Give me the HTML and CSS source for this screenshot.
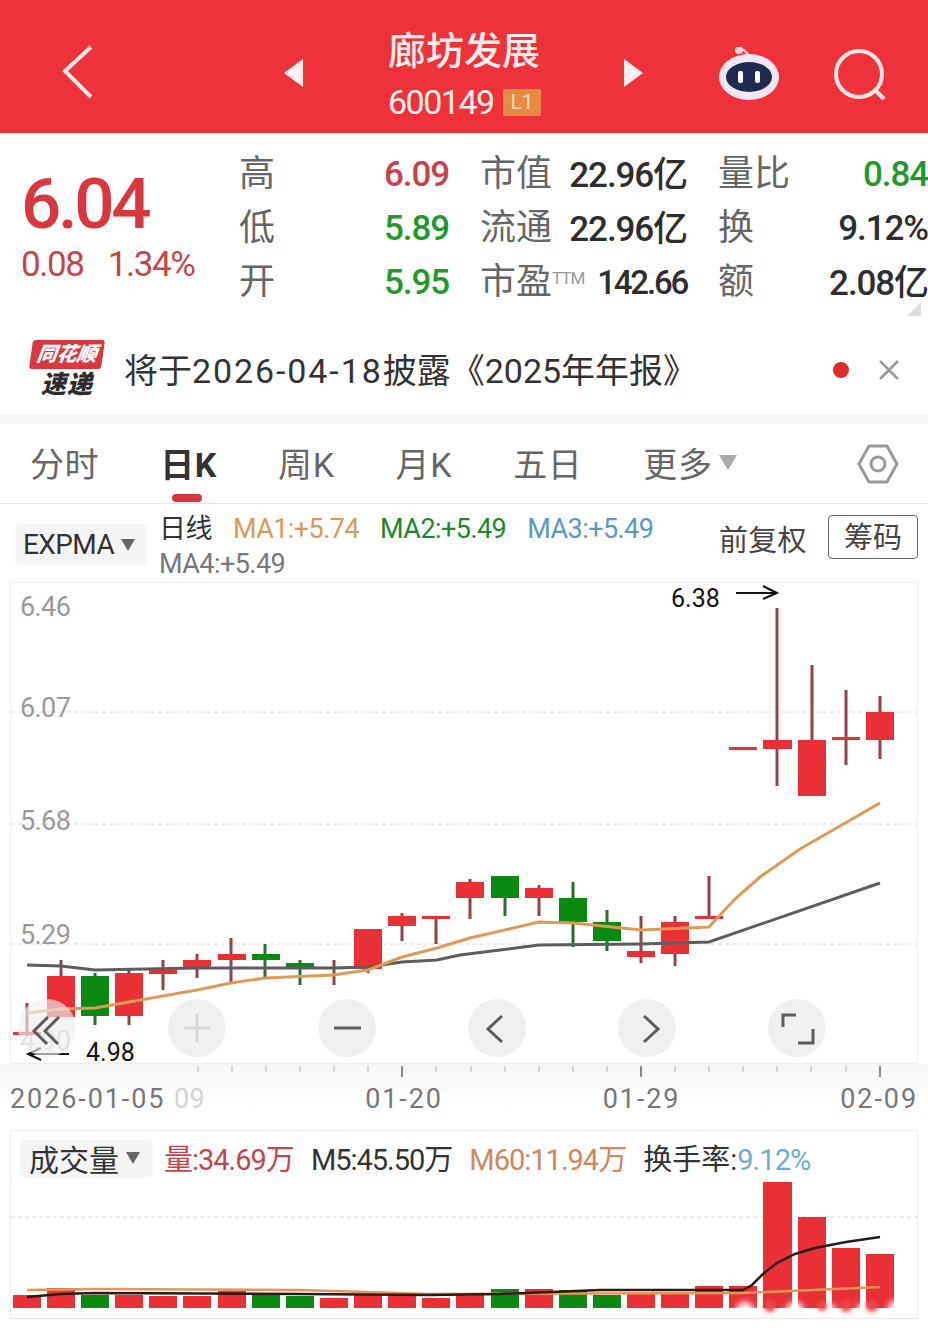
FILE: index.html
```html
<!DOCTYPE html>
<html>
<head>
    <meta charset="utf-8" />
    <title>廊坊发展</title>
    <link rel="stylesheet" href="styles.css">
</head>
<body>
    <div class="topbar">
        <svg class="back" width="32" height="54" viewBox="0 0 32 54"><path d="M29 2 3 26l26 26" /></svg>
        <div class="tri-left"></div>
        <div class="title">
            <div class="name">廊坊发展</div>
            <div class="code"><span>600149</span><span class="lv">L1</span></div>
        </div>
        <div class="tri-right"></div>
        <svg class="robot" width="62" height="56" viewBox="718 46 62 56">
            <path class="antenna" d="M739 48c4 0 7 2 9 6" />
            <circle class="antenna-dot" cx="739" cy="49" r="4" />
            <ellipse class="head" cx="749" cy="76" rx="30" ry="23" />
            <ellipse class="face" cx="749" cy="76" rx="23" ry="15" />
            <rect class="eye" x="738" y="70" width="5" height="12" rx="2" />
            <rect class="eye" x="755" y="70" width="5" height="12" rx="2" />
        </svg>
        <svg class="search" width="54" height="54" viewBox="832 46 54 54">
            <circle cx="858" cy="72" r="23" />
            <path d="m874 88 9 9" />
        </svg>
    </div>

    <div class="quote">
        <div class="price">
            <div class="now">6.04</div>
            <div class="change"><span>0.08</span><span>1.34%</span></div>
        </div>
        <div class="stats">
            <div class="cell"><span class="lab">高</span><span class="red">6.09</span></div>
            <div class="cell"><span class="lab">市值</span><span class="val yi">22.96亿</span></div>
            <div class="cell"><span class="lab">量比</span><span class="green">0.84</span></div>
            <div class="cell"><span class="lab">低</span><span class="green">5.89</span></div>
            <div class="cell"><span class="lab">流通</span><span class="val yi">22.96亿</span></div>
            <div class="cell"><span class="lab">换</span><span class="val">9.12%</span></div>
            <div class="cell"><span class="lab">开</span><span class="green">5.95</span></div>
            <div class="cell"><span class="lab">市盈<sup class="ttm">TTM</sup></span><span class="val pe">142.66</span></div>
            <div class="cell"><span class="lab">额</span><span class="val yi">2.08亿</span></div>
        </div>
        <div class="corner"></div>
    </div>

    <div class="news">
        <div class="logo">
            <div class="logo-tag">同花顺</div>
            <div class="logo-txt">速递</div>
        </div>
        <div class="news-txt">将于<span class="date">2026-04-18</span>披露《2025年年报》</div>
        <div class="dot"></div>
        <svg class="close" width="22" height="22" viewBox="0 0 22 22"><path d="m2 2 18 18M20 2 2 20" /></svg>
    </div>
    <div class="strip"></div>

    <div class="tabs">
        <div class="tab">分时</div>
        <div class="tab active">日K</div>
        <div class="tab">周K</div>
        <div class="tab">月K</div>
        <div class="tab">五日</div>
        <div class="tab more">更多<i class="down"></i></div>
        <svg class="hex" width="42" height="42" viewBox="0 0 42 42">
            <path d="M12 3h18l10 18-10 18H12L2 21z" />
            <circle cx="21" cy="21" r="7" />
        </svg>
    </div>

    <div class="ind">
        <div class="chip expma">EXPMA<i class="down dark"></i></div>
        <div class="ma">
            <span class="ri">日线</span>
            <span class="ma1">MA1:+5.74</span>
            <span class="ma2">MA2:+5.49</span>
            <span class="ma3">MA3:+5.49</span>
            <span class="ma4">MA4:+5.49</span>
        </div>
        <div class="fq">前复权</div>
        <div class="cm">筹码</div>
    </div>

    <svg class="kline" width="928" height="488" viewBox="0 582 928 488">
        <rect class="frame" x="10.5" y="582.5" width="907" height="481" />
        <path class="grid" d="M11 712h906M11 824h906M11 944h906" />
        <text class="ylab" x="20" y="616">6.46</text>
        <text class="ylab" x="20" y="717">6.07</text>
        <text class="ylab" x="20" y="830">5.68</text>
        <text class="ylab" x="20" y="944">5.29</text>
        <text class="ylab faint" x="20" y="1050">4.90</text>

        <g class="wick-r">
            <path d="M27 1003v33M61 960v17M129 970v55M163 960v30M197 954v24M231 938v44M334 960v25M368 969v4M402 913v28M436 919v25M470 879v40M539 885v31M641 916v47M675 916v50M709 876v40M777 608v178M812 665v75M846 690v75M880 696v63" />
        </g>
        <g class="wick-g">
            <path d="M95 973v52M265 944v34M300 960v25M505 898v18M573 882v65M607 910v41" />
        </g>
        <g class="body-r">
            <rect x="13" y="1032" width="28" height="3" />
            <rect x="47" y="976" width="28" height="41" />
            <rect x="115" y="973" width="28" height="43" />
            <rect x="149" y="970" width="28" height="4" />
            <rect x="183" y="960" width="28" height="8" />
            <rect x="218" y="954" width="28" height="6" />
            <rect x="320" y="967" width="28" height="2" />
            <rect x="354" y="929" width="28" height="40" />
            <rect x="388" y="916" width="28" height="10" />
            <rect x="422" y="916" width="28" height="3" />
            <rect x="456" y="882" width="28" height="16" />
            <rect x="525" y="888" width="28" height="10" />
            <rect x="627" y="951" width="28" height="6" />
            <rect x="661" y="922" width="28" height="32" />
            <rect x="695" y="916" width="28" height="3" />
            <rect x="729" y="747" width="28" height="3" />
            <rect x="763" y="740" width="29" height="9" />
            <rect x="798" y="740" width="28" height="56" />
            <rect x="832" y="737" width="28" height="3" />
            <rect x="866" y="712" width="28" height="28" />
        </g>
        <g class="body-g">
            <rect x="81" y="976" width="28" height="40" />
            <rect x="252" y="954" width="28" height="6" />
            <rect x="286" y="963" width="28" height="6" />
            <rect x="491" y="876" width="28" height="22" />
            <rect x="559" y="898" width="28" height="24" />
            <rect x="593" y="922" width="28" height="19" />
        </g>
        <polyline class="line-gray" points="27,965 61,966 95,970 197,968 333,968 368,967 402,962 437,960 460,955 539,945 641,944 709,942 880,883" />
        <polyline class="line-orange" points="27,1013 61,1009 95,1008 129,1002 197,990 231,983 265,978 333,975 368,970 402,957 437,948 470,938 539,922 573,923 641,930 709,927 735,899 760,877 800,849 880,803" />

        <text class="mark" x="671" y="607">6.38</text>
        <path class="arrow" d="M736 593h41m-14-7 14 7-14 6" />
        <text class="mark" x="86" y="1061">4.98</text>
        <path class="arrow" d="M69 1054H28m13-6-13 6 13 6" />

        <circle class="btn ghost" cx="47" cy="1028" r="29" />
        <path class="btn-ico" d="M48 1017l-14 14 13 13M59 1017l-14 14 13 13" />
        <circle class="btn" cx="197" cy="1028" r="29" />
        <path class="btn-ico pale" d="M197 1014v28M184 1028h26" />
        <circle class="btn" cx="347" cy="1028" r="29" />
        <path class="btn-ico" d="M334 1028h27" />
        <circle class="btn" cx="497" cy="1028" r="29" />
        <path class="btn-ico" d="m502 1016-14 13 14 13" />
        <circle class="btn" cx="647" cy="1028" r="29" />
        <path class="btn-ico" d="m644 1016 14 13-14 13" />
        <circle class="btn" cx="797" cy="1028" r="29" />
        <path class="btn-ico" d="M796 1015h-13v12M798 1043h15v-14" />
    </svg>

    <div class="axis">
        <svg class="ticks" width="928" height="14" viewBox="0 1064 928 14">
            <path class="tick" d="M198 1066v6M232 1066v6M266 1066v6M300 1066v6M334 1066v6M368 1066v6M436 1066v6M471 1066v6M505 1066v6M539 1066v6M573 1066v6M607 1066v6M675 1066v6M709 1066v6M743 1066v6M777 1066v6M811 1066v6M846 1066v6" />
            <path class="tick big" d="M402 1066v11M641 1066v11M880 1066v11" />
        </svg>
        <div class="dates">
            <span>2026-01-05 <em>09</em></span>
            <span>01-20</span>
            <span>01-29</span>
            <span>02-09</span>
        </div>
    </div>

    <div class="vol">
        <div class="vol-head">
            <div class="chip cjl">成交量<i class="down dark"></i></div>
            <span class="v-red">量:34.69万</span>
            <span class="v-dark">M5:45.50万</span>
            <span class="v-org">M60:11.94万</span>
            <span class="v-dark v-rate">换手率:<b class="v-blue">9.12%</b></span>
        </div>
        <svg class="vol-chart" width="928" height="138" viewBox="0 1181 928 138">
            <path class="grid" d="M11 1218h906" />
            <g class="body-r">
                <rect x="13" y="1296" width="28" height="13" />
                <rect x="47" y="1289" width="28" height="20" />
                <rect x="115" y="1296" width="28" height="13" />
                <rect x="149" y="1297" width="28" height="12" />
                <rect x="183" y="1297" width="28" height="12" />
                <rect x="218" y="1292" width="28" height="17" />
                <rect x="320" y="1299" width="28" height="10" />
                <rect x="354" y="1295" width="28" height="14" />
                <rect x="388" y="1296" width="28" height="13" />
                <rect x="422" y="1299" width="28" height="10" />
                <rect x="456" y="1296" width="28" height="13" />
                <rect x="525" y="1290" width="28" height="19" />
                <rect x="627" y="1294" width="28" height="15" />
                <rect x="661" y="1294" width="28" height="15" />
                <rect x="695" y="1287" width="28" height="22" />
                <rect x="729" y="1287" width="28" height="22" />
                <rect x="763" y="1183" width="29" height="126" />
                <rect x="798" y="1218" width="28" height="91" />
                <rect x="832" y="1249" width="28" height="60" />
                <rect x="866" y="1255" width="28" height="54" />
            </g>
            <g class="body-g">
                <rect x="81" y="1296" width="28" height="13" />
                <rect x="252" y="1294" width="28" height="15" />
                <rect x="286" y="1297" width="28" height="12" />
                <rect x="491" y="1290" width="28" height="19" />
                <rect x="559" y="1291" width="28" height="18" />
                <rect x="593" y="1296" width="28" height="13" />
            </g>
            <polyline class="v-line-org" points="27,1291 95,1290 300,1291 430,1295 743,1294 880,1288" />
            <polyline class="v-line-blk" points="27,1298 61,1295 95,1294 300,1295 430,1296 500,1295 600,1291 743,1291 752,1286 764,1274 777,1264 795,1255 815,1249 846,1243 880,1238" />
            <g class="smear">
                <circle cx="745" cy="1312" r="9" />
                <circle cx="795" cy="1312" r="9" />
                <circle cx="829" cy="1312" r="7" />
                <circle cx="863" cy="1312" r="7" />
                <circle cx="897" cy="1310" r="9" />
            </g>
            <g class="smear-r">
                <circle cx="770" cy="1307" r="6" />
                <circle cx="822" cy="1307" r="5" />
                <circle cx="846" cy="1307" r="6" />
                <circle cx="872" cy="1307" r="6" />
            </g>
        </svg>
    </div>
</body>
</html>
```

FILE: styles.css
```css
* {
    box-sizing: border-box;
}
body {
    margin: 0;
    width: 928px;
    height: 1328px;
    overflow: hidden;
    background-color: #fff;
    font-family: Roboto, "Noto Sans CJK SC", sans-serif;
    color: #333;
}
.topbar {
    height: 133px;
    background-color: #ee3239;
    display: flex;
    align-items: center;
}
.back {
    margin: 10px 0 0 62px;
    fill: none;
    stroke: #fbe6e6;
    stroke-width: 4;
}
.tri-left, .tri-right {
    width: 0;
    height: 0;
    margin-top: 13px;
    border-top: 14px solid transparent;
    border-bottom: 14px solid transparent;
}
.tri-left {
    margin-left: 190px;
    border-right: 19px solid #fdf0f0;
}
.tri-right {
    margin-left: 83px;
    border-left: 19px solid #fdf0f0;
}
.title {
    width: 153px;
    margin-left: 85px;
    color: #fdeeee;
}
.name {
    font-size: 38px;
    font-weight: 500;
    line-height: 44px;
    white-space: nowrap;
    margin-top: 18px;
}
.code {
    display: flex;
    align-items: center;
    justify-content: space-between;
    font-size: 34px;
    letter-spacing: -1.5px;
    line-height: 40px;
    margin-top: 9px;
}
.lv {
    width: 38px;
    height: 27px;
    background-color: #e78a45;
    border-radius: 2px;
    font-size: 21px;
    letter-spacing: 0;
    line-height: 27px;
    text-align: center;
    color: #f8ddb8;
}
.robot {
    margin: 17px 0 0 75px;
}
.antenna {
    fill: none;
    stroke: #f3cfd8;
    stroke-width: 2.5;
}
.antenna-dot {
    fill: #f6d8dc;
}
.head {
    fill: #efe6f6;
}
.face {
    fill: #1f2a52;
}
.eye {
    fill: #fff;
}
.search {
    margin: 17px 0 0 53px;
    fill: none;
    stroke: #fde6e6;
    stroke-width: 4;
}

.quote {
    position: relative;
    height: 197px;
    display: flex;
}
.price {
    width: 240px;
    padding: 33px 0 0 21px;
    color: #d8383d;
}
.now {
    font-size: 71px;
    font-weight: 500;
    line-height: 76px;
    letter-spacing: -3.4px;
}
.change {
    display: flex;
    gap: 24px;
    font-size: 35px;
    line-height: 44px;
    letter-spacing: -1.4px;
    margin-top: 1px;
    color: #c9444a;
}
.stats {
    display: grid;
    grid-template-columns: 209px 206px 209px;
    grid-auto-rows: 54px;
    column-gap: 32px;
    padding-top: 14px;
}
.cell {
    display: flex;
    justify-content: space-between;
    align-items: center;
    font-size: 35px;
    font-weight: 500;
    letter-spacing: -1.1px;
    white-space: nowrap;
}
.lab {
    color: #666;
    font-size: 36px;
    font-weight: 400;
    letter-spacing: 0;
    margin: 0 0 8px -1px;
}
.ttm {
    font-size: 17px;
    letter-spacing: -1px;
    color: #999;
    vertical-align: 10px;
    line-height: 0;
}
.val {
    color: #2e2e2e;
}
.yi {
    margin-bottom: 6px;
}
.pe {
    font-size: 33px;
    letter-spacing: -2.2px;
}
.red {
    color: #c8424a;
}
.green {
    color: #1f9a2a;
}
.corner {
    position: absolute;
    left: 907px;
    top: 169px;
    width: 0;
    height: 0;
    border-left: 14px solid transparent;
    border-bottom: 14px solid #ddd;
}

.news {
    height: 85px;
    display: flex;
    align-items: center;
    padding: 0 0 5px 31px;
}
.logo {
    width: 72px;
}
.logo-tag {
    height: 29px;
    background-color: #d9383e;
    color: #fff;
    border-radius: 3px;
    font-size: 20px;
    font-weight: 900;
    font-style: italic;
    line-height: 29px;
    text-align: center;
    transform: skewX(-8deg);
}
.logo-txt {
    font-size: 25px;
    font-weight: 900;
    font-style: italic;
    line-height: 31px;
    text-align: center;
    color: #2c2c2c;
    letter-spacing: 1px;
}
.news-txt {
    margin: 0 0 4px 21px;
    font-size: 34px;
    color: #333;
    white-space: nowrap;
    width: 709px;
}
.date {
    letter-spacing: 1.9px;
}
.dot {
    width: 16px;
    height: 16px;
    border-radius: 50%;
    background-color: #e02b2b;
}
.close {
    margin-left: 29px;
    fill: none;
    stroke: #999;
    stroke-width: 2.5;
}
.strip {
    height: 9px;
    background-color: #f6f6f6;
}

.tabs {
    position: relative;
    height: 80px;
    display: flex;
    align-items: center;
    gap: 61px;
    padding: 0 0 2px 30px;
    border-bottom: 1px solid #e4e4e4;
}
.tab {
    font-size: 34px;
    letter-spacing: 0.6px;
    color: #666;
    display: flex;
    align-items: center;
}
.tab.active {
    position: relative;
    font-weight: 700;
    color: #333;
}
.tab.active::after {
    content: "";
    position: absolute;
    left: 12px;
    top: 56px;
    width: 30px;
    height: 8px;
    border-radius: 4px;
    background-color: #d8383d;
}
.down {
    display: inline-block;
    width: 0;
    height: 0;
    margin-left: 6px;
    border-left: 9px solid transparent;
    border-right: 9px solid transparent;
    border-top: 15px solid #aaa;
}
.down.dark {
    margin-left: 7px;
    border-left-width: 7px;
    border-right-width: 7px;
    border-top: 12px solid #666;
}
.hex {
    position: absolute;
    left: 857px;
    top: 19px;
    fill: none;
    stroke: #999;
    stroke-width: 3;
}

.ind {
    height: 78px;
    display: flex;
    padding-left: 15px;
}
.chip {
    background-color: #f5f5f5;
    border-radius: 5px;
    display: flex;
    align-items: center;
    color: #333;
}
.expma {
    width: 132px;
    height: 41px;
    margin-top: 20px;
    padding-left: 8px;
    font-size: 28px;
    letter-spacing: -0.6px;
}
.ma {
    width: 560px;
    margin-left: 12px;
    padding-top: 8px;
    display: flex;
    flex-wrap: wrap;
    column-gap: 21px;
    font-size: 27px;
    line-height: 34px;
    letter-spacing: -0.55px;
}
.ri {
    color: #333;
}
.ma1 {
    color: #d89a55;
}
.ma2 {
    color: #1a8a2a;
}
.ma3 {
    color: #5b97c9;
}
.ma4 {
    width: 100%;
    color: #777;
}
.fq {
    font-size: 29px;
    letter-spacing: 0.3px;
    color: #444;
    margin-top: 13px;
}
.cm {
    width: 90px;
    height: 44px;
    margin: 11px 0 0 21px;
    padding-top: 2px;
    border: 1px solid #666;
    border-radius: 4px;
    font-size: 29px;
    line-height: 40px;
    text-align: center;
    color: #444;
}

.kline, .ticks, .vol-chart {
    display: block;
}
.kline {
    margin-bottom: -6px;
}
.frame {
    fill: #fff;
    stroke: #eee;
}
.grid {
    fill: none;
    stroke: #d8d8d8;
    stroke-dasharray: 4 3;
}
.ylab {
    font-size: 27px;
    fill: #999;
    letter-spacing: -0.6px;
}
.ylab.faint {
    fill: #ccc;
}
.wick-r path {
    fill: none;
    stroke: #96404a;
    stroke-width: 3;
}
.wick-g path {
    fill: none;
    stroke: #2a6e2a;
    stroke-width: 3;
}
.body-r {
    fill: #e83035;
}
.body-g {
    fill: #0a8a10;
}
.line-gray {
    fill: none;
    stroke: #5d5d60;
    stroke-width: 3;
}
.line-orange {
    fill: none;
    stroke: #dc9c58;
    stroke-width: 3;
}
.mark {
    font-size: 25px;
    fill: #111;
}
.arrow {
    fill: none;
    stroke: #111;
    stroke-width: 2;
}
.btn {
    fill: #f0f0f0;
}
.btn.ghost {
    fill: rgba(240, 240, 240, 0.65);
}
.btn-ico {
    fill: none;
    stroke: #5c5c5c;
    stroke-width: 3;
}
.btn-ico.pale {
    stroke: #d8d8d8;
}

.axis {
    height: 66px;
    background: linear-gradient(#f7f7f7, #fff 70%);
}
.tick {
    fill: none;
    stroke: #ccc;
    stroke-width: 1.5;
}
.tick.big {
    stroke: #888;
    stroke-width: 2;
}
.dates {
    display: flex;
    justify-content: space-between;
    padding: 2px 10px 0;
    font-size: 27px;
    line-height: 38px;
    letter-spacing: 1.9px;
    color: #777;
}
.dates em {
    font-style: normal;
    letter-spacing: 0.5px;
    color: #d4d4d4;
}

.vol {
    margin: 0 10px;
    height: 189px;
    border: 1px solid #eee;
    border-bottom-color: #e8e8e8;
}
.vol-head {
    height: 49px;
    display: flex;
    align-items: center;
    gap: 17px;
    padding: 7px 0 0 9px;
    font-size: 29px;
    letter-spacing: -1px;
    white-space: nowrap;
}
.vol-head span {
    margin-bottom: 4px;
}
.cjl {
    width: 133px;
    height: 38px;
    padding: 0 0 2px 9px;
    font-size: 30px;
    letter-spacing: 0;
    margin-right: -6px;
}
.v-red {
    color: #c8444c;
}
.v-dark {
    color: #333;
}
.v-org {
    color: #d0875a;
}
.v-rate {
    letter-spacing: 0;
}
.v-blue {
    font-weight: 400;
    letter-spacing: -0.9px;
    color: #6ab0cc;
}
.vol-chart {
    margin-left: -11px;
}
.v-line-org {
    fill: none;
    stroke: #e8935a;
    stroke-width: 2.5;
}
.v-line-blk {
    fill: none;
    stroke: #2a1a1a;
    stroke-width: 2.5;
}
.smear {
    fill: #fff;
    filter: blur(3px);
}
.smear-r {
    fill: #e8484c;
    filter: blur(2px);
}
```
